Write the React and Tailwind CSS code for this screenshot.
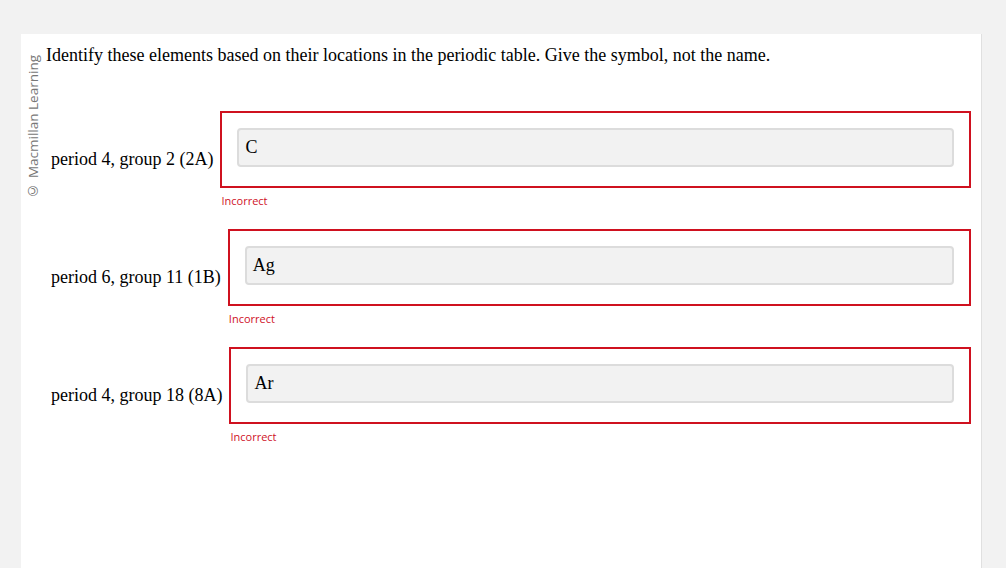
const rows = [
  { label: 'period 4, group 2 (2A)', value: 'C' },
  { label: 'period 6, group 11 (1B)', value: 'Ag' },
  { label: 'period 4, group 18 (8A)', value: 'Ar' },
];

const serif = "font-['Liberation_Serif','Times_New_Roman',serif]";
const sans = "font-['Open_Sans','Noto_Sans',sans-serif]";

function AnswerRow({ label, value }) {
  return (
    <div className="mb-[21px] flex items-start">
      <span className={`${serif} pt-[38px] text-[18px] leading-[21px] text-black whitespace-nowrap`}>
        {label}
      </span>
      <div className="ml-[7px] flex-1">
        <div className="border-2 border-[#cf111f] px-[15px] pt-[15px] pb-[19px]">
          <div className={`${serif} flex h-[39px] items-center rounded-[4px] border-2 border-[#dcdcdc] bg-[#f2f2f2] px-[6px] text-[18px] leading-[21px] text-black`}>
            {value}
          </div>
        </div>
        <div className={`${sans} ml-[1px] mt-[5px] text-[11px] leading-[15px] text-[#cf111f]`}>
          Incorrect
        </div>
      </div>
    </div>
  );
}

export default function App() {
  return (
    <div className="h-[568px] w-[1006px] overflow-hidden bg-[#f2f2f2] pt-[34px]">
      <div className="ml-[21px] flex h-[534px] w-[961px] border-r border-[#e0e0e0] bg-white">
        {/* side watermark */}
        <div className="flex w-[25px] shrink-0 items-start justify-center pt-[21px]">
          <span className={`${sans} rotate-180 text-[13.5px] leading-[15px] text-[#777] whitespace-nowrap [writing-mode:vertical-rl]`}>
            © Macmillan Learning
          </span>
        </div>

        <div className="flex-1 pr-[10px] pt-[11px]">
          <p className={`${serif} text-[18px] leading-[21px] text-black`}>
            Identify these elements based on their locations in the periodic table. Give the symbol, not the name.
          </p>
          <div className="ml-[5px] mt-[45px]">
            {rows.map((r) => (
              <AnswerRow key={r.label} label={r.label} value={r.value} />
            ))}
          </div>
        </div>
      </div>
    </div>
  );
}
